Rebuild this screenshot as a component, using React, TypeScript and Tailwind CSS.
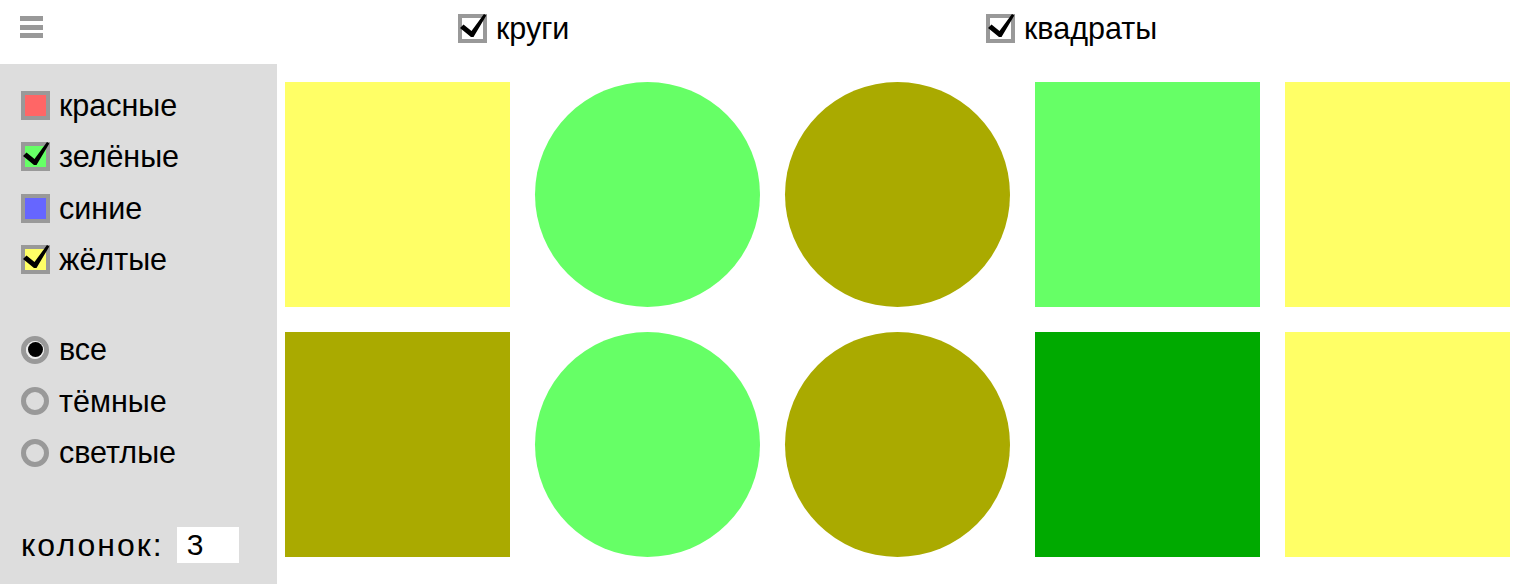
import React from "react";

const FONT = { fontFamily: "'Liberation Sans', Arial, sans-serif" };

function Tick() {
  return (
    <svg
      width="29"
      height="29"
      viewBox="0 0 29 29"
      className="absolute left-0 top-0 overflow-visible"
    >
      <polygon
        points="2,14 5.5,10.5 13.5,17 26,0 28.3,1.4 15.5,23 13,23"
        fill="#000"
      />
    </svg>
  );
}

function Box({ fill, checked }: { fill: string; checked: boolean }) {
  return (
    <div className="relative w-[29px] h-[29px] shrink-0">
      <div
        className="w-[29px] h-[29px] border-[4.5px] border-[#999999]"
        style={{ backgroundColor: fill }}
      />
      {checked && <Tick />}
    </div>
  );
}

function Radio({ checked }: { checked: boolean }) {
  return (
    <div className="w-[28px] h-[28px] rounded-full border-[5px] border-[#999999] flex items-center justify-center shrink-0">
      {checked && (
        <div className="w-[18px] h-[18px] rounded-full bg-[#eeeeee] flex items-center justify-center">
          <div className="w-[15px] h-[15px] rounded-full bg-black" />
        </div>
      )}
    </div>
  );
}

const colorRows = [
  { label: "красные", fill: "#ff6666", checked: false },
  { label: "зелёные", fill: "#66ff66", checked: true },
  { label: "синие", fill: "#6666ff", checked: false },
  { label: "жёлтые", fill: "#ffff66", checked: true },
];

const radioRows = [
  { label: "все", checked: true },
  { label: "тёмные", checked: false },
  { label: "светлые", checked: false },
];

const shapes: { color: string; circle: boolean }[] = [
  { color: "#ffff66", circle: false },
  { color: "#66ff66", circle: true },
  { color: "#aaaa00", circle: true },
  { color: "#66ff66", circle: false },
  { color: "#ffff66", circle: false },
  { color: "#aaaa00", circle: false },
  { color: "#66ff66", circle: true },
  { color: "#aaaa00", circle: true },
  { color: "#00aa00", circle: false },
  { color: "#ffff66", circle: false },
];

export default function App() {
  return (
    <div
      className="w-[1532px] h-[584px] overflow-hidden bg-white text-black flex flex-col"
      style={FONT}
    >
      {/* header */}
      <div className="h-[64px] shrink-0 flex items-start">
        <div className="ml-[20px] mt-[16px] w-[23px] flex flex-col gap-[3.5px]">
          <div className="h-[5px] bg-[#999999]" />
          <div className="h-[5px] bg-[#999999]" />
          <div className="h-[5px] bg-[#999999]" />
        </div>
        <div className="ml-[415px] mt-[14px] w-[528px] flex items-center gap-[9px] text-[30.5px] leading-[29px]">
          <Box fill="#ffffff" checked />
          <span>круги</span>
        </div>
        <div className="mt-[14px] flex items-center gap-[9px] text-[30.5px] leading-[29px]">
          <Box fill="#ffffff" checked />
          <span>квадраты</span>
        </div>
      </div>

      {/* body */}
      <div className="flex flex-1 min-h-0">
        <div className="w-[277px] shrink-0 bg-[#dddddd] flex flex-col pt-[15.25px] pl-[21px] text-[30.5px]">
          {colorRows.map((r) => (
            <div key={r.label} className="h-[51.5px] flex items-center gap-[9px]">
              <Box fill={r.fill} checked={r.checked} />
              <span className="leading-none">{r.label}</span>
            </div>
          ))}
          <div className="h-[38.5px]" />
          {radioRows.map((r) => (
            <div key={r.label} className="h-[51.5px] flex items-center">
              <div className="w-[38px] flex">
                <Radio checked={r.checked} />
              </div>
              <span className="leading-none">{r.label}</span>
            </div>
          ))}
          <div className="mt-[49px] flex items-center">
            <span className="text-[32px] tracking-[2px] leading-none">колонок:</span>
            <div className="ml-[13px] w-[62px] h-[36px] bg-white pl-[10px] flex items-center text-[30px] leading-none">
              3
            </div>
          </div>
        </div>

        <div className="flex-1 pl-[8px] pt-[18px]">
          <div className="grid grid-cols-[repeat(5,225px)] gap-[25px]">
            {shapes.map((s, i) => (
              <div
                key={i}
                className={s.circle ? "w-[225px] h-[225px] rounded-full" : "w-[225px] h-[225px]"}
                style={{ backgroundColor: s.color }}
              />
            ))}
          </div>
        </div>
      </div>
    </div>
  );
}
